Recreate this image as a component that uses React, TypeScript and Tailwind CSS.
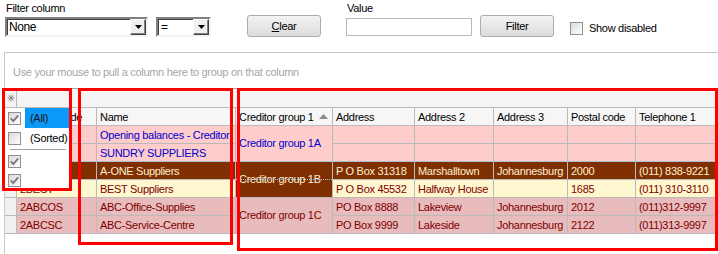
import React from "react";

function Check({ checked }: { checked: boolean }) {
  return (
    <svg width="13" height="13" viewBox="0 0 13 13" className="block">
      <defs>
        <linearGradient id="cbg" x1="0" y1="0" x2="1" y2="1">
          <stop offset="0" stopColor="#d8d8d8" />
          <stop offset="1" stopColor="#ffffff" />
        </linearGradient>
      </defs>
      <rect x="0.5" y="0.5" width="12" height="12" fill="url(#cbg)" stroke="#8f8f8f" />
      {checked && (
        <path d="M2.8 6.3 L5.3 9 L10.2 3.3" fill="none" stroke="#7a7a7a" strokeWidth="1.9" />
      )}
    </svg>
  );
}

function DropBtn() {
  return (
    <div className="absolute right-0 top-0 w-[16px] h-[16px] bg-[#f0f0f0] border border-t-white border-l-white border-b-[#404040] border-r-[#404040] shadow-[inset_-1px_-1px_0_#808080] flex items-center justify-center">
      <svg width="7" height="4" viewBox="0 0 7 4" className="block">
        <path d="M0 0 H7 L3.5 4 Z" fill="#000" />
      </svg>
    </div>
  );
}

type Row = {
  code: string;
  name: string;
  addr: string;
  addr2: string;
  addr3: string;
  postal: string;
  tel: string;
  cls: string;
};

const rows: Row[] = [
  { code: "", name: "Opening balances - Creditor", addr: "", addr2: "", addr3: "", postal: "", tel: "", cls: "bg-[#ffcccc] text-[#0000cc]" },
  { code: "", name: "SUNDRY SUPPLIERS", addr: "", addr2: "", addr3: "", postal: "", tel: "", cls: "bg-[#ffcccc] text-[#0000cc]" },
  { code: "", name: "A-ONE Suppliers", addr: "P O Box 31318", addr2: "Marshalltown", addr3: "Johannesburg", postal: "2000", tel: "(011) 838-9221", cls: "bg-[#7f2f00] text-[#fff0d2]" },
  { code: "2BEST", name: "BEST Suppliers", addr: "P O Box 45532", addr2: "Halfway House", addr3: "", postal: "1685", tel: "(011) 310-3110", cls: "bg-[#fff7cf] text-[#800000]" },
  { code: "2ABCOS", name: "ABC-Office-Supplies", addr: "PO Box 8888", addr2: "Lakeview", addr3: "Johannesburg", postal: "2012", tel: "(011)312-9997", cls: "bg-[#e8bcbc] text-[#800000]" },
  { code: "2ABCSC", name: "ABC-Service-Centre", addr: "PO Box 9999", addr2: "Lakeside", addr3: "Johannesburg", postal: "2122", tel: "(011)313-9997", cls: "bg-[#e8bcbc] text-[#800000]" },
];

const groups = [
  { label: "Creditor group 1A", cls: "bg-[#ffcccc] text-[#0000cc]" },
  { label: "Creditor group 1B", cls: "bg-[#7f2f00] text-[#fff0d2]" },
  { label: "Creditor group 1C", cls: "bg-[#e8bcbc] text-[#800000]" },
];

const COLS = "grid grid-cols-[12px_80px_139px_97px_82px_79px_74px_68px_83px]";
const CELL = "border-r border-b border-[#bababa] pl-[3px] pt-[1px] leading-[16px] whitespace-nowrap overflow-hidden";

export default function App() {
  return (
    <div className="relative w-[718px] h-[254px] overflow-hidden bg-white text-black font-['Liberation_Sans',Arial,sans-serif] text-[11px] tracking-[-0.3px]">
      {/* toolbar */}
      <div className="flex h-[52px]">
        <div className="ml-[5px] pt-[2px] flex flex-col">
          <div className="h-[13px] leading-[13px] ml-[1px]">Filter column</div>
          <div className="mt-[2px] flex">
            <div className="relative w-[143px] h-[20px] bg-white border-2 border-t-[#808080] border-l-[#808080] border-b-[#f4f4f4] border-r-[#f4f4f4] shadow-[inset_1px_1px_0_#404040]">
              <div className="pl-[2px] leading-[16px] text-[12px] tracking-[-0.4px]">None</div>
              <DropBtn />
            </div>
            <div className="ml-[8px] relative w-[55px] h-[20px] bg-white border-2 border-t-[#808080] border-l-[#808080] border-b-[#f4f4f4] border-r-[#f4f4f4] shadow-[inset_1px_1px_0_#404040]">
              <div className="pl-[3px] leading-[16px] text-[12px]">=</div>
              <DropBtn />
            </div>
          </div>
        </div>
        <div className="ml-[36px] mt-[15px] w-[74px] h-[22px] rounded-[3px] border border-[#acacac] bg-linear-to-b from-[#f3f3f3] to-[#dcdcdc] flex items-center justify-center">
          <span>
            <span className="underline">C</span>lear
          </span>
        </div>
        <div className="ml-[25px] pt-[2px] flex flex-col">
          <div className="h-[13px] leading-[13px] ml-[1px]">Value</div>
          <div className="mt-[3px] w-[126px] h-[18px] border border-[#b9b9b9] bg-white" />
        </div>
        <div className="ml-[8px] mt-[15px] w-[74px] h-[22px] rounded-[3px] border border-[#acacac] bg-linear-to-b from-[#f3f3f3] to-[#dcdcdc] flex items-center justify-center">
          Filter
        </div>
        <div className="ml-[16px] mt-[22px] flex items-center h-[13px]">
          <div className="w-[13px] h-[13px] border border-[#8f8f8f] bg-linear-to-br from-[#dcdcdc] to-white" />
          <div className="ml-[6px] leading-[13px]">Show disabled</div>
        </div>
      </div>

      {/* group panel + grid */}
      <div className="ml-[4px] h-[202px] border-l border-t border-[#c8c8c8]">
        <div className="h-[35px] pl-[8px] pt-[13px] leading-[13px] text-[#a6a6a6]">
          Use your mouse to pull a column here to group on that column
        </div>
        <div className="border-t border-[#a8a8a8]">
          {/* band row */}
          <div className="flex h-[19px] bg-[#f4f4f4] border-b border-[#bababa]">
            <div className="w-[12px] h-full border-r border-[#bababa] flex items-center justify-center">
              <svg width="8" height="8" viewBox="0 0 8 8" className="block">
                <g stroke="#8a8a8a" strokeWidth="1">
                  <path d="M4 0.5 V7.5" />
                  <path d="M0.5 4 H7.5" />
                  <path d="M1.5 1.5 L6.5 6.5" />
                  <path d="M6.5 1.5 L1.5 6.5" />
                </g>
              </svg>
            </div>
          </div>
          {/* column headers */}
          <div className={`${COLS} h-[18px] bg-[#f6f6f6]`}>
            <div className={CELL} />
            <div className={CELL}>Creditor code</div>
            <div className={CELL}>Name</div>
            <div className={`${CELL} flex items-start`}>
              <span>Creditor group 1</span>
              <svg width="9" height="5" viewBox="0 0 9 5" className="ml-[5px] mt-[5px] block shrink-0">
                <path d="M0 5 L4.5 0 L9 5 Z" fill="#8c8c8c" />
              </svg>
            </div>
            <div className={CELL}>Address</div>
            <div className={CELL}>Address 2</div>
            <div className={CELL}>Address 3</div>
            <div className={CELL}>Postal code</div>
            <div className={CELL}>Telephone 1</div>
          </div>
          {/* data rows */}
          <div className={`${COLS} grid-rows-[repeat(6,18px)]`}>
            {rows.map((r, i) => (
              <React.Fragment key={i}>
                <div className="border-r border-b border-[#bababa] bg-[#f0f0f0]" />
                <div className={`${CELL} ${r.cls}`}>{r.code}</div>
                <div className={`${CELL} ${r.cls}`}>{r.name}</div>
                {i % 2 === 0 && (
                  <div
                    className={`row-span-2 relative border-r border-b border-[#bababa] pl-[3px] flex items-center whitespace-nowrap overflow-hidden ${groups[i / 2].cls}`}
                  >
                    {groups[i / 2].label}
                    {i === 2 && (
                      <div className="absolute left-0 right-0 top-[17px] border-t border-dotted border-[#9cc4ec]" />
                    )}
                  </div>
                )}
                <div className={`${CELL} ${r.cls}`}>{r.addr}</div>
                <div className={`${CELL} ${r.cls}`}>{r.addr2}</div>
                <div className={`${CELL} ${r.cls}`}>{r.addr3}</div>
                <div className={`${CELL} ${r.cls}`}>{r.postal}</div>
                <div className={`${CELL} ${r.cls}`}>{r.tel}</div>
              </React.Fragment>
            ))}
          </div>
        </div>
      </div>

      {/* focus rectangle on selected row */}
      <div className="absolute left-[17px] top-[161px] w-[701px] h-[18px] border-t border-r border-dotted border-[#9cc4ec] pointer-events-none" />

      {/* filter popup */}
      <div className="absolute left-[5px] top-[108px] w-[66px] h-[82px] bg-white flex flex-col">
        <div className="h-[20px] flex items-center">
          <div className="ml-[3px]"><Check checked /></div>
          <div className="ml-[4px] h-full flex-1 bg-[#0c98f6] pl-[5px] leading-[20px] text-[#1a1a1a]">(All)</div>
        </div>
        <div className="h-[20px] flex items-center">
          <div className="ml-[3px]"><Check checked={false} /></div>
          <div className="ml-[9px] leading-[20px]">(Sorted)</div>
        </div>
        <div className="h-[4px] pt-[1px] px-[5px]">
          <div className="h-px bg-[#a0a0a0]" />
        </div>
        <div className="h-[19px] flex items-center">
          <div className="ml-[3px]"><Check checked /></div>
        </div>
        <div className="h-[19px] flex items-center">
          <div className="ml-[3px]"><Check checked /></div>
        </div>
      </div>

      {/* red annotation boxes */}
      <div className="absolute left-[2px] top-[88px] w-[70px] h-[103px] border-[3px] border-[#ff0000] pointer-events-none" />
      <div className="absolute left-[78px] top-[88px] w-[155px] h-[157px] border-[3px] border-[#ff0000] pointer-events-none" />
      <div className="absolute left-[237px] top-[88px] w-[481px] h-[163px] border-[3px] border-[#ff0000] pointer-events-none" />
    </div>
  );
}
